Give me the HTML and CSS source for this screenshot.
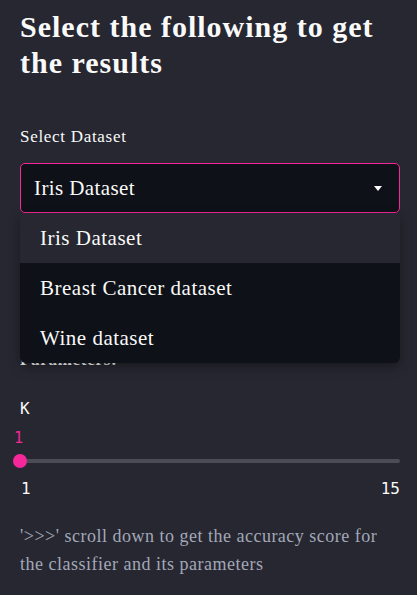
FILE: index.html
```html
<!DOCTYPE html>
<html>
<head>
<meta charset="utf-8">
<link rel="stylesheet" href="styles.css">
</head>
<body>
<div class="sidebar">
  <h1 class="title">Select the following to get the results</h1>

  <div class="field">
    <label class="label">Select Dataset</label>
    <div class="select-wrap">
      <div class="select open">
        <span class="select-value">Iris Dataset</span>
        <svg class="caret" width="8" height="5" viewBox="0 0 8 5"><path d="M0 0 H8 L4 5 Z" fill="#fafafa"/></svg>
      </div>
      <ul class="menu">
        <li class="option active">Iris Dataset</li>
        <li class="option">Breast Cancer dataset</li>
        <li class="option">Wine dataset</li>
      </ul>
    </div>
  </div>

  <p class="params">Parameters:</p>

  <div class="slider">
    <div class="slider-label">K</div>
    <div class="slider-body">
      <div class="slider-value">1</div>
      <div class="track">
        <div class="thumb"></div>
      </div>
      <div class="ticks">
        <span>1</span>
        <span>15</span>
      </div>
    </div>
  </div>

  <p class="caption">'&gt;&gt;&gt;' scroll down to get the accuracy score for the classifier and its parameters</p>
</div>
</body>
</html>
```

FILE: styles.css
```css
html, body {
  margin: 0;
  padding: 0;
  background: #262730;
}
body {
  font-family: "Liberation Serif", "Times New Roman", serif;
  color: #fafafa;
}
.sidebar {
  width: 417px;
  height: 595px;
  overflow: hidden;
  box-sizing: border-box;
  padding: 9px 17px 0 20px;
  display: flex;
  flex-direction: column;
}
.title {
  margin: 0;
  font-size: 30px;
  line-height: 36px;
  font-weight: 700;
  letter-spacing: 1px;
  color: #fafafa;
}
.field {
  margin-top: 46px;
  display: flex;
  flex-direction: column;
}
.label {
  font-size: 17px;
  line-height: 20px;
  letter-spacing: 0.7px;
  margin-bottom: 16px;
}
.select-wrap {
  position: relative;
}
.select {
  height: 50px;
  box-sizing: border-box;
  border: 1px solid #262730;
  border-radius: 5px;
  background: #0e1117;
  display: flex;
  align-items: center;
  justify-content: space-between;
  padding: 0 17px 0 13px;
}
.select.open {
  border-color: #f5279a;
}
.select-value {
  font-size: 21px;
  letter-spacing: 0.4px;
}
.caret {
  display: block;
}
.menu {
  position: absolute;
  left: 0;
  right: 0;
  top: 50px;
  margin: 0;
  padding: 0;
  list-style: none;
  background: #0e1117;
  border-radius: 0 0 6px 6px;
  box-shadow: 0 4px 12px rgba(0,0,0,0.35);
  overflow: hidden;
  z-index: 2;
}
.option {
  height: 50px;
  display: flex;
  align-items: center;
  padding-left: 20px;
  font-size: 21px;
  letter-spacing: 0.5px;
  color: #fafafa;
}
.option.active {
  background: #262730;
}
.params {
  margin: 136px 0 0 0;
  font-size: 17px;
  line-height: 22px;
  font-weight: 600;
  letter-spacing: 0.7px;
}
.slider {
  margin-top: 28px;
  display: flex;
  flex-direction: column;
}
.slider-label {
  font-family: "DejaVu Sans Mono", "Liberation Mono", monospace;
  font-size: 16px;
  line-height: 20px;
}
.slider-body {
  margin-top: 10px;
  display: flex;
  flex-direction: column;
}
.slider-value {
  font-family: "DejaVu Sans Mono", "Liberation Mono", monospace;
  font-size: 15px;
  line-height: 18px;
  color: #f5279a;
  margin-left: -6px;
}
.track {
  position: relative;
  margin-top: 12px;
  height: 4px;
  border-radius: 2px;
  background: #4b4c56;
}
.thumb {
  position: absolute;
  left: -7px;
  top: -5px;
  width: 14px;
  height: 14px;
  border-radius: 50%;
  background: #f5279a;
}
.ticks {
  display: flex;
  justify-content: space-between;
  margin-top: 16px;
  font-family: "DejaVu Sans Mono", "Liberation Mono", monospace;
  font-size: 16px;
  line-height: 20px;
}
.ticks span:first-child {
  margin-left: 1px;
}
.caption {
  margin: 23px 0 0 0;
  padding-right: 10px;
  font-size: 18px;
  line-height: 28px;
  letter-spacing: 0.5px;
  color: #a3a8b8;
}
```
